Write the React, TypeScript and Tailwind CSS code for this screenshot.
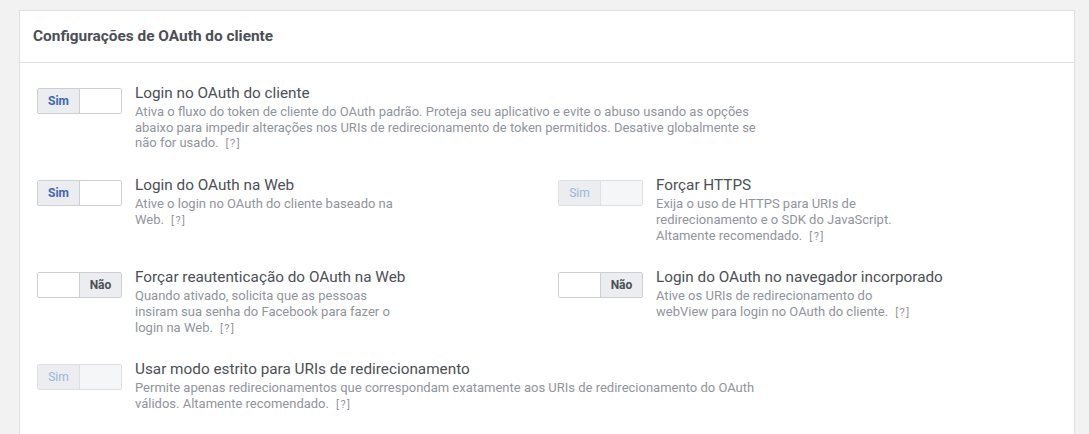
import React from "react";

type Mode = "on" | "off" | "disabled";

function Toggle({ mode }: { mode: Mode }) {
  if (mode === "on") {
    return (
      <div className="flex h-[26px] w-[85px] shrink-0 overflow-hidden rounded-[2px] border border-[#ccd0d5] mt-[5px]">
        <div className="flex w-[42px] items-center justify-center border-r border-[#ccd0d5] bg-[#ebedf0] text-[12px] font-bold text-[#4267b2]">
          Sim
        </div>
        <div className="flex-1 bg-white" />
      </div>
    );
  }
  if (mode === "off") {
    return (
      <div className="flex h-[26px] w-[85px] shrink-0 overflow-hidden rounded-[2px] border border-[#ccd0d5] mt-[5px]">
        <div className="w-[42px] border-r border-[#ccd0d5] bg-white" />
        <div className="flex flex-1 items-center justify-center bg-[#ebedf0] text-[12px] font-bold text-[#4b4f56]">
          Não
        </div>
      </div>
    );
  }
  return (
    <div className="flex h-[26px] w-[85px] shrink-0 overflow-hidden rounded-[2px] border border-[#dddfe2] mt-[5px]">
      <div className="flex w-[42px] items-center justify-center border-r border-[#dddfe2] bg-[#ebedf0] text-[12px] font-normal text-[#9cb4d8]">
        Sim
      </div>
      <div className="flex-1 bg-[#f5f6f7]" />
    </div>
  );
}

function Setting({
  mode,
  title,
  desc,
  wide,
}: {
  mode: Mode;
  title: string;
  desc: string;
  wide?: boolean;
}) {
  return (
    <div className="flex gap-[13px]">
      <Toggle mode={mode} />
      <div className={wide ? "w-[640px]" : "w-[270px]"}>
        <div className="whitespace-nowrap text-[15.3px] leading-[20px] text-[#4b4f56]">{title}</div>
        <div className="mt-[1px] text-[13px] leading-[15.7px] text-[#90949c]">
          {desc}
          <span className="ml-[7px] text-[11px] tracking-[1.5px] text-[#90949c]">[?]</span>
        </div>
      </div>
    </div>
  );
}

export default function App() {
  return (
    <div
      className="min-h-[434px] w-full bg-[#f2f2f2] pl-[19px] pr-[14px] pt-[10px]"
      style={{ fontFamily: "Roboto, 'Noto Sans', Arial, sans-serif" }}
    >
      <div className="border border-[#dddfe2] bg-white pb-[40px]">
        <div className="flex h-[52px] items-center border-b border-[#dddfe2] px-[13px]">
          <h2 className="text-[15.4px] font-bold text-[#4b4f56]">
            Configurações de OAuth do cliente
          </h2>
        </div>
        <div className="grid grid-cols-[521px_1fr] gap-y-[23px] px-[17px] pt-[20px]">
          <div className="col-span-2">
            <Setting
              mode="on"
              wide
              title="Login no OAuth do cliente"
              desc="Ativa o fluxo do token de cliente do OAuth padrão. Proteja seu aplicativo e evite o abuso usando as opções abaixo para impedir alterações nos URIs de redirecionamento de token permitidos. Desative globalmente se não for usado."
            />
          </div>
          <Setting
            mode="on"
            title="Login do OAuth na Web"
            desc="Ative o login no OAuth do cliente baseado na Web."
          />
          <Setting
            mode="disabled"
            title="Forçar HTTPS"
            desc="Exija o uso de HTTPS para URIs de redirecionamento e o SDK do JavaScript. Altamente recomendado."
          />
          <Setting
            mode="off"
            title="Forçar reautenticação do OAuth na Web"
            desc="Quando ativado, solicita que as pessoas insiram sua senha do Facebook para fazer o login na Web."
          />
          <Setting
            mode="off"
            title="Login do OAuth no navegador incorporado"
            desc="Ative os URIs de redirecionamento do webView para login no OAuth do cliente."
          />
          <div className="col-span-2">
            <Setting
              mode="disabled"
              wide
              title="Usar modo estrito para URIs de redirecionamento"
              desc="Permite apenas redirecionamentos que correspondam exatamente aos URIs de redirecionamento do OAuth válidos. Altamente recomendado."
            />
          </div>
        </div>
      </div>
    </div>
  );
}
